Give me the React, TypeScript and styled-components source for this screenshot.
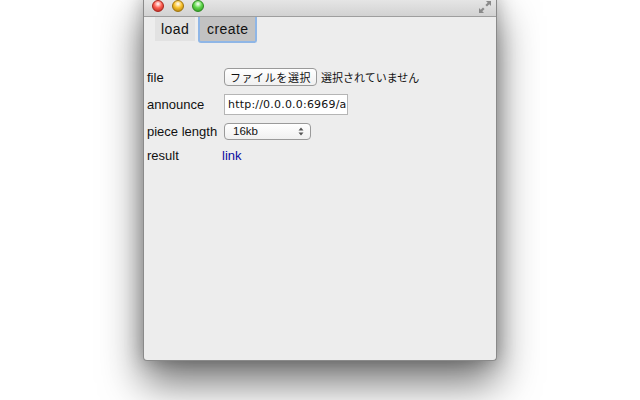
import React from "react";
import styled, { createGlobalStyle } from "styled-components";

const Global = createGlobalStyle`
  html, body { margin: 0; padding: 0; background: #ffffff; }
  body { width: 640px; height: 400px; overflow: hidden; font-family: "Liberation Sans", Arial, sans-serif; }
`;

const Stage = styled.div`
  width: 640px;
  height: 400px;
  display: flex;
  justify-content: flex-start;
  padding-left: 143px;
  box-sizing: border-box;
  overflow: hidden;
`;

const Window = styled.div`
  width: 354px;
  height: 367px;
  margin-top: -6px;
  display: flex;
  flex-direction: column;
  background: #ededed;
  border: 1px solid #8a8a8a;
  border-top: none;
  border-radius: 0 0 4px 4px;
  box-sizing: border-box;
  box-shadow: 0 22px 42px rgba(0, 0, 0, 0.55), 0 0 18px rgba(0, 0, 0, 0.25);
`;

const TitleBar = styled.div`
  height: 22px;
  flex: none;
  display: flex;
  align-items: center;
  padding: 0 8px;
  gap: 8px;
  background: linear-gradient(#ececec, #d2d2d2);
  border-bottom: 1px solid #9e9e9e;
  position: relative;
`;

const Light = styled.div<{ $c: string; $d: string }>`
  width: 12px;
  height: 12px;
  margin-top: 1px;
  border-radius: 50%;
  box-sizing: border-box;
  border: 1px solid ${(p) => p.$d};
  background: radial-gradient(circle at 50% 30%, #ffffff 0%, ${(p) => p.$c} 45%, ${(p) => p.$d} 100%);
`;

const Resize = styled.svg`
  position: absolute;
  right: 4px;
  top: 6px;
`;

const Tabs = styled.div`
  display: flex;
  gap: 3px;
  padding: 0 0 0 10px;
  align-items: flex-start;
`;

const Tab = styled.button<{ $active?: boolean }>`
  font-family: "Liberation Sans", Arial, sans-serif;
  font-size: 14px;
  color: #111;
  padding: ${(p) => (p.$active ? "0 7px" : "0 6px")};
  height: ${(p) => (p.$active ? "26px" : "24px")};
  border: ${(p) => (p.$active ? "2px solid #8fb6e6" : "none")};
  border-top: none;
  border-radius: ${(p) => (p.$active ? "0 0 3px 3px" : "0")};
  background: ${(p) => (p.$active ? "#c2c2c2" : "#e2e2e2")};
  display: flex;
  align-items: center;
  box-sizing: border-box;
  letter-spacing: 0.4px;
  margin-left: ${(p) => (p.$active ? "0" : "1px")};
`;

const Form = styled.div`
  display: grid;
  grid-template-columns: 77px auto;
  padding: 21px 0 0 3px;
  align-items: center;
  font-size: 13px;
  color: #111;
`;

const Label = styled.div<{ $h?: number }>`
  font-size: 13px;
  height: ${(p) => p.$h ?? 26}px;
  display: flex;
  align-items: center;
`;

const Cell = styled.div<{ $h?: number }>`
  height: ${(p) => p.$h ?? 26}px;
  display: flex;
  align-items: center;
  gap: 4px;
`;

const FileButton = styled.button`
  font-family: "Noto Sans CJK JP", sans-serif;
  font-size: 11px;
  height: 18px;
  width: 93px;
  padding: 0;
  border: 1px solid #9a9a9a;
  border-radius: 4px;
  background: linear-gradient(#ffffff, #f0f0f0);
  color: #111;
  display: flex;
  align-items: center;
  justify-content: center;
  letter-spacing: 0.6px;
`;

const FileText = styled.span`
  font-family: "Noto Sans CJK JP", sans-serif;
  font-size: 11px;
  color: #111;
`;

const Input = styled.div`
  width: 124px;
  height: 21px;
  box-sizing: border-box;
  border: 1px solid #b5b5b5;
  background: #fff;
  font-family: "DejaVu Sans", sans-serif;
  font-size: 11px;
  letter-spacing: 0.2px;
  padding-left: 3px;
  display: flex;
  align-items: center;
  overflow: hidden;
  white-space: nowrap;
  color: #111;
`;

const Select = styled.div`
  width: 87px;
  height: 17px;
  box-sizing: border-box;
  border: 1px solid #9a9a9a;
  border-radius: 4px;
  background: linear-gradient(#ffffff, #f0f0f0);
  font-family: "Liberation Sans", Arial, sans-serif;
  font-size: 11.5px;
  padding: 0 6px 0 8px;
  display: flex;
  align-items: center;
  justify-content: space-between;
  color: #111;
`;

const Link = styled.a`
  color: #0a0aa0;
  font-size: 13px;
  text-decoration: none;
  margin-left: -2px;
`;

export default function App() {
  return (
    <>
      <Global />
      <Stage>
        <Window>
          <TitleBar>
            <Light $c="#ff5f52" $d="#a8231b" />
            <Light $c="#f9c22b" $d="#a0740d" />
            <Light $c="#5fd84a" $d="#2b8a1f" />
            <Resize width="14" height="14" viewBox="0 0 14 14">
              <path d="M8 1 H13 V6 L11.3 4.3 L9 6.6 L7.4 5 L9.7 2.7 Z" fill="#8a8a8a" />
              <path d="M6 13 H1 V8 L2.7 9.7 L5 7.4 L6.6 9 L4.3 11.3 Z" fill="#8a8a8a" />
            </Resize>
          </TitleBar>
          <Tabs>
            <Tab>load</Tab>
            <Tab $active>create</Tab>
          </Tabs>
          <Form>
            <Label>file</Label>
            <Cell>
              <FileButton>ファイルを選択</FileButton>
              <FileText>選択されていません</FileText>
            </Cell>
            <Label $h={28}>announce</Label>
            <Cell $h={28}>
              <Input>http://0.0.0.0:6969/a</Input>
            </Cell>
            <Label>piece length</Label>
            <Cell>
              <Select>
                <span>16kb</span>
                <svg width="6" height="9" viewBox="0 0 6 9">
                  <path d="M0.5 3.5 L3 0.5 L5.5 3.5 Z M0.5 5.5 L3 8.5 L5.5 5.5 Z" fill="#555" />
                </svg>
              </Select>
            </Cell>
            <Label $h={22}>result</Label>
            <Cell $h={22}>
              <Link href="#">link</Link>
            </Cell>
          </Form>
        </Window>
      </Stage>
    </>
  );
}
